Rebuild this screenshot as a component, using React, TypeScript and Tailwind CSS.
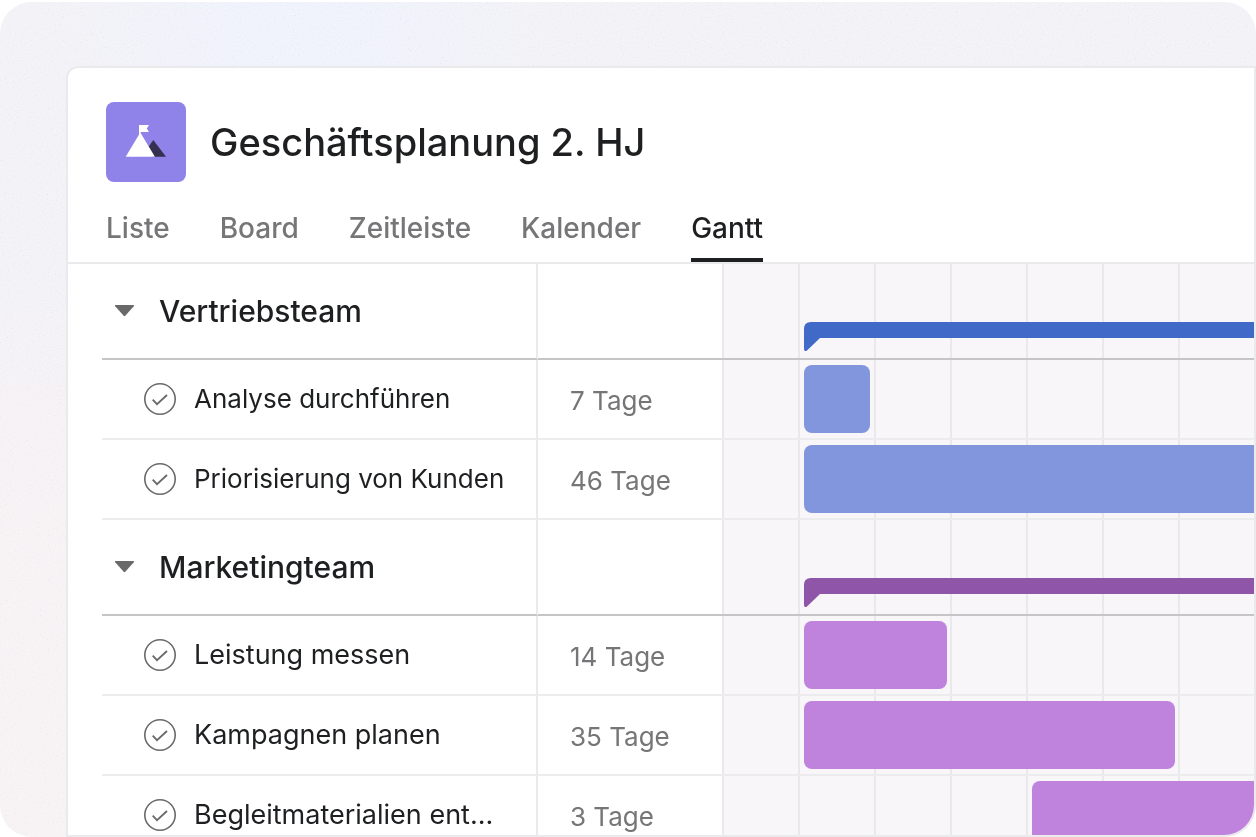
import { useState } from "react";

// =============================================================================
// Project data
// =============================================================================
const TABS = ["Liste", "Board", "Zeitleiste", "Kalender", "Gantt"];

interface Task {
  name: string;
  duration: string;
  start: number;
  width: number;
}

interface Section {
  name: string;
  summary: string;
  summaryFill: string;
  bar: string;
  text: string;
  tasks: Task[];
}

// start and width are in timeline pixels, one column is 76px
const SECTIONS: Section[] = [
  {
    name: "Vertriebsteam",
    summary: "bg-[#4169c7]",
    summaryFill: "fill-[#4169c7]",
    bar: "bg-[#8296dd]",
    text: "text-[26px]",
    tasks: [
      { name: "Analyse durchführen", duration: "7 Tage", start: 82, width: 66 },
      { name: "Priorisierung von Kunden", duration: "46 Tage", start: 82, width: 520 },
    ],
  },
  {
    name: "Marketingteam",
    summary: "bg-[#8e55a8]",
    summaryFill: "fill-[#8e55a8]",
    bar: "bg-[#bf82dd]",
    text: "text-[27px]",
    tasks: [
      { name: "Leistung messen", duration: "14 Tage", start: 82, width: 143 },
      { name: "Kampagnen planen", duration: "35 Tage", start: 82, width: 371 },
      { name: "Begleitmaterialien ent...", duration: "3 Tage", start: 310, width: 300 },
    ],
  },
];

const TIMELINE =
  "overflow-hidden bg-[#f8f6f9] bg-[repeating-linear-gradient(to_right,#e9e8ea_0px,#e9e8ea_2px,transparent_2px,transparent_76px)] p-0";

// =============================================================================
// Icons
// =============================================================================
function MountainIcon() {
  return (
    <svg viewBox="0 0 80 80" className="size-20 shrink-0 rounded-lg bg-[#8f82e9]" aria-hidden="true">
      <path d="M47.3 38 60 54.7H46L41 47z" fill="#35304f" />
      <path d="M34.3 30.5 48.9 54.7H19.7z" fill="#fff" />
      <path d="M33 23h10l-2.2 3.5L43 30h-8.4v3H33z" fill="#fff" />
    </svg>
  );
}

function CheckCircle() {
  return (
    <svg viewBox="0 0 32 32" className="size-8 shrink-0" fill="none" stroke="#6a696a" aria-hidden="true">
      <circle cx="16" cy="16" r="15.2" strokeWidth="1.6" />
      <path d="m8.7 16.6 4.3 4.6L23 12" strokeWidth="1.8" />
    </svg>
  );
}

function Grain() {
  return (
    <svg className="absolute inset-0 size-full opacity-60 mix-blend-soft-light" aria-hidden="true">
      <filter id="grain">
        <feTurbulence type="fractalNoise" baseFrequency="0.6" numOctaves="2" />
        <feColorMatrix
          type="matrix"
          values="1.6 0 0 0 -0.3  1.6 0 0 0 -0.3  1.6 0 0 0 -0.3  0 0 0 0 1"
        />
      </filter>
      <rect width="100%" height="100%" filter="url(#grain)" />
    </svg>
  );
}

// =============================================================================
// Header
// =============================================================================
function Header({ active, onSelect }: { active: string; onSelect: (tab: string) => void }) {
  return (
    <header className="border-b-2 border-[#eae9eb] px-[38px] pt-[34px]">
      <div className="flex items-center gap-6">
        <MountainIcon />
        <h1 className="text-[38px] font-medium whitespace-nowrap">Geschäftsplanung 2. HJ</h1>
      </div>
      <nav className="mt-[26px] flex gap-[50px]">
        {TABS.map((tab) => (
          <a
            key={tab}
            href={`#${tab.toLowerCase()}`}
            onClick={() => onSelect(tab)}
            className={
              tab === active
                ? "border-b-4 border-[#1e1f21] pb-2.5 text-[28px] leading-10 font-medium"
                : "border-b-4 border-transparent pb-2.5 text-[28px] leading-10 font-medium text-[#767577]"
            }
          >
            {tab}
          </a>
        ))}
      </nav>
    </header>
  );
}

// =============================================================================
// Gantt rows
// =============================================================================
function SectionRow({ section, open, onToggle }: { section: Section; open: boolean; onToggle: () => void }) {
  return (
    <tr className="h-24 *:border-b-2 *:border-b-[#c5c4c6]">
      <th scope="rowgroup" className="border-r-2 border-r-[#eae9eb] p-0 pl-3 text-left font-medium">
        <button
          type="button"
          aria-expanded={open}
          onClick={onToggle}
          className="flex items-center gap-6 text-[30px] leading-10"
        >
          <svg viewBox="0 0 21 12" className={open ? "h-3 w-[21px]" : "h-3 w-[21px] -rotate-90"} fill="#6a696a" aria-hidden="true">
            <path d="M1.5 0h18q1 .3.3 1.3l-8.5 9.5q-.8.7-1.6 0L1.2 1.3Q.5.3 1.5 0z" />
          </svg>
          {section.name}
        </button>
      </th>
      <td />
      <td className={TIMELINE}>
        <div className="mt-[50px] ml-[82px] flex items-start">
          <svg viewBox="0 0 16 29" className={`h-[29px] w-4 shrink-0 ${section.summaryFill}`} aria-hidden="true">
            <path d="M0 7Q0 0 7 0h9v16L3 28.4q-3 1.6-3-1.4z" />
          </svg>
          <div className={`h-4 flex-1 ${section.summary}`} />
        </div>
      </td>
    </tr>
  );
}

function TaskRow({ task, bar, text }: { task: Task; bar: string; text: string }) {
  return (
    <tr className="h-20 *:border-b-2 *:border-b-[#ecebed]">
      <td className="border-r-2 border-r-[#eae9eb] p-0 pl-[42px]">
        <label className={`relative flex items-center gap-[18px] leading-10 whitespace-nowrap ${text}`}>
          <input type="checkbox" className="sr-only" />
          <CheckCircle />
          {task.name}
        </label>
      </td>
      <td className="p-0 pt-1 pl-8 text-[26px] leading-10 text-[#767577]">{task.duration}</td>
      <td className={TIMELINE}>
        <div className={`h-[68px] rounded-lg ${bar}`} style={{ marginLeft: task.start, width: task.width }} />
      </td>
    </tr>
  );
}

function GanttTable() {
  const [closed, setClosed] = useState<string[]>([]);

  const toggle = (name: string) =>
    setClosed((prev) => (prev.includes(name) ? prev.filter((n) => n !== name) : [...prev, name]));

  return (
    <div className="pl-[34px]">
      <table className="w-full table-fixed border-separate border-spacing-0">
        <colgroup>
          <col className="w-[436px]" />
          <col className="w-[184px]" />
          <col />
        </colgroup>
        {SECTIONS.map((section) => {
          const open = !closed.includes(section.name);
          return (
            <tbody key={section.name}>
              <SectionRow section={section} open={open} onToggle={() => toggle(section.name)} />
              {open &&
                section.tasks.map((task) => (
                  <TaskRow key={task.name} task={task} bar={section.bar} text={section.text} />
                ))}
            </tbody>
          );
        })}
      </table>
    </div>
  );
}

// =============================================================================
// Page
// =============================================================================
export default function App() {
  const [active, setActive] = useState("Gantt");

  return (
    <div className="h-screen bg-white pt-0.5 font-['Inter',sans-serif] text-[#1e1f21]">
      <div className="relative h-full overflow-hidden rounded-[32px] bg-[radial-gradient(circle_at_24%_3%,#edf1fc_0%,transparent_22%),linear-gradient(to_bottom,#f1f0f5_0%,#f1f0f5_35%,#f6f0f3_60%,#f5f1f3_100%)] pt-16 pl-[66px]">
        <Grain />
        <main className="relative h-full overflow-hidden rounded-tl-xl rounded-br-[32px] border-2 border-[#eae9ec] bg-white">
          <Header active={active} onSelect={setActive} />
          <GanttTable />
        </main>
      </div>
    </div>
  );
}
